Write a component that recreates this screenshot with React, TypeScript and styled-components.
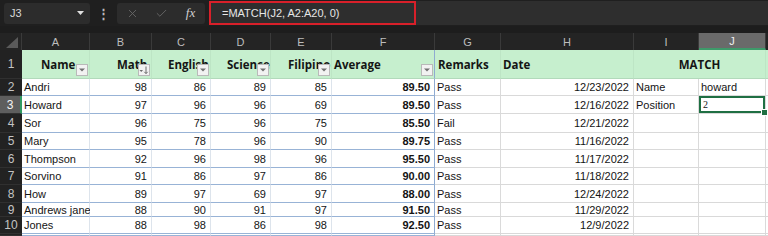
import React from 'react';
import styled, { createGlobalStyle, css } from 'styled-components';
import { X, Check } from 'lucide-react';

const GlobalStyle = createGlobalStyle`
  html, body {
    margin: 0;
    padding: 0;
    background: #ffffff;
  }
  body {
    font-family: "Liberation Sans", Arial, sans-serif;
  }
`;

const WIDTHS = [68, 62, 59, 60, 61, 103, 66, 133, 65, 67];
const LETTERS = ['A', 'B', 'C', 'D', 'E', 'F', 'G', 'H', 'I', 'J'];
const ROW_HEIGHTS = [17, 18, 19, 17, 18, 17, 18, 14, 17];

const rows = [
  ['Andri', 98, 86, 89, 85, '89.50', 'Pass', '12/23/2022', 'Name', 'howard'],
  ['Howard', 97, 96, 96, 69, '89.50', 'Pass', '12/16/2022', 'Position', '2'],
  ['Sor', 96, 75, 96, 75, '85.50', 'Fail', '12/21/2022', '', ''],
  ['Mary', 95, 78, 96, 90, '89.75', 'Pass', '11/16/2022', '', ''],
  ['Thompson', 92, 96, 98, 96, '95.50', 'Pass', '11/17/2022', '', ''],
  ['Sorvino', 91, 86, 97, 86, '90.00', 'Pass', '11/18/2022', '', ''],
  ['How', 89, 97, 69, 97, '88.00', 'Pass', '12/24/2022', '', ''],
  ['Andrews jane', 88, 90, 91, 97, '91.50', 'Pass', '11/29/2022', '', ''],
  ['Jones', 88, 98, 86, 98, '92.50', 'Pass', '12/9/2022', '', ''],
];

const headers = [
  { label: 'Name', indent: 19, sort: false },
  { label: 'Math', indent: 27, sort: true },
  { label: 'English', indent: 16, sort: false },
  { label: 'Science', indent: 16, sort: false },
  { label: 'Filipino', indent: 17, sort: false },
  { label: 'Average', indent: 2, sort: false },
];

const Page = styled.div`
  width: 768px;
  height: 236px;
  overflow: hidden;
  display: flex;
  flex-direction: column;
  background: #1d1d1d;
`;

const FormulaBar = styled.div`
  height: 26px;
  flex-shrink: 0;
  display: flex;
  align-items: center;
  padding-left: 4px;
  background: #1f1f1f;
`;

const NameBox = styled.div`
  width: 86px;
  height: 21px;
  box-sizing: border-box;
  display: flex;
  align-items: center;
  justify-content: space-between;
  padding: 0 6px 0 6px;
  background: #2c2c2c;
  border-radius: 3px;
  color: #dadada;
  font-size: 11px;
`;

const Dots = styled.div`
  width: 27px;
  text-align: center;
  color: #b8b8b8;
  font-size: 13px;
  font-weight: bold;
`;

const FxGroup = styled.div`
  width: 88px;
  height: 21px;
  display: grid;
  grid-template-columns: repeat(3, 29px);
  align-items: center;
  justify-items: center;
  padding-left: 1px;
  box-sizing: border-box;
  background: #2c2c2c;
  border-radius: 3px;
  color: #6a6a6a;
`;

const Fx = styled.span`
  font-family: "Liberation Serif", serif;
  font-style: italic;
  font-size: 13px;
  color: #cfcfcf;
`;

const FormulaArea = styled.div`
  flex: 1;
  height: 24px;
  margin-left: 4px;
  display: flex;
  background: #2e2e2e;
`;

const Highlight = styled.div`
  width: 207px;
  box-sizing: border-box;
  border: 2px solid #d8202a;
  display: flex;
  align-items: center;
  padding-left: 11px;
  color: #e6e6e6;
  font-size: 11px;
`;

const HeaderGap = styled.div`
  height: 7px;
  flex-shrink: 0;
  background: #1d1d1d;
`;

const Sheet = styled.div`
  flex: 1;
  display: grid;
  grid-template-columns: 22px ${WIDTHS.map((w) => `${w}px`).join(' ')} 1fr;
  grid-template-rows: 17px 29px ${ROW_HEIGHTS.map((h) => `${h}px`).join(' ')} 1fr;
  background: #ffffff;
  overflow: hidden;
`;

const Corner = styled.div`
  background: #242424;
  border-right: 1px solid #3a3a3a;
  display: flex;
  align-items: flex-end;
  justify-content: flex-end;
  padding: 0 3px 2px 0;
`;

const ColHead = styled.div<{ $active?: boolean }>`
  background: #242424;
  color: #bdbdbd;
  font-size: 11px;
  display: flex;
  align-items: center;
  justify-content: center;
  border-right: 1px solid #3a3a3a;
  box-sizing: border-box;
  ${(p) =>
    p.$active &&
    css`
      background: #6a6a6a;
      color: #f0f0f0;
      border-bottom: 2px solid #3e9a6a;
    `}
`;

const RowHead = styled.div<{ $active?: boolean }>`
  background: #222222;
  color: #c4c4c4;
  font-size: 12px;
  display: flex;
  align-items: center;
  justify-content: center;
  border-bottom: 1px solid #303030;
  box-sizing: border-box;
  overflow: hidden;
  ${(p) =>
    p.$active &&
    css`
      background: #5e5e5e;
      color: #f4f4f4;
      border-right: 2px solid #2f9a62;
    `}
`;

const TitleCell = styled.div<{ $indent?: number; $edge?: boolean; $center?: boolean }>`
  position: relative;
  overflow: hidden;
  background: #c6efce;
  display: flex;
  align-items: center;
  justify-content: ${(p) => (p.$center ? 'center' : 'flex-start')};
  padding-left: ${(p) => p.$indent ?? 0}px;
  box-sizing: border-box;
  white-space: nowrap;
  font-family: "Open Sans", "Noto Sans", sans-serif;
  font-weight: 700;
  font-size: 11.5px;
  color: #151515;
  border-bottom: 1px solid #b2d9bb;
  border-right: 1px solid ${(p) => (p.$edge ? '#8fabd1' : '#bde5c5')};
`;

const FilterButton = styled.span`
  position: absolute;
  right: 1px;
  bottom: 2px;
  width: 12px;
  height: 12px;
  box-sizing: border-box;
  background: #f2f2f2;
  border: 1px solid #b9b9b9;
  display: flex;
  align-items: center;
  justify-content: center;
`;

const Cell = styled.div<{
  $zone: 'table' | 'plain';
  $align?: 'left' | 'right';
  $bold?: boolean;
  $edge?: boolean;
  $selected?: boolean;
}>`
  position: relative;
  display: flex;
  align-items: center;
  justify-content: ${(p) => (p.$align === 'right' ? 'flex-end' : 'flex-start')};
  padding: ${(p) => (p.$align === 'right' ? '0 4px 0 0' : '0 0 0 2px')};
  box-sizing: border-box;
  white-space: nowrap;
  font-size: 11px;
  font-weight: ${(p) => (p.$bold ? 700 : 400)};
  color: #141414;
  background: #ffffff;
  border-bottom: 1px solid ${(p) => (p.$zone === 'table' ? '#98b3d6' : '#d9d9d9')};
  border-right: 1px solid
    ${(p) => (p.$edge ? '#8fabd1' : p.$zone === 'table' ? '#dde4ec' : '#dadada')};
  ${(p) =>
    p.$selected &&
    css`
      box-shadow: inset 0 0 0 2px #1f6f43;
      &::after {
        content: '';
        position: absolute;
        right: -3px;
        bottom: -3px;
        width: 5px;
        height: 5px;
        background: #1f6f43;
        border: 1px solid #ffffff;
        z-index: 2;
      }
    `}
`;

const TinyValue = styled.span`
  font-family: "Liberation Serif", serif;
  font-size: 10px;
  padding-left: 2px;
`;

const Caret = () => (
  <svg width="7" height="4" viewBox="0 0 7 4">
    <polygon points="0,0 7,0 3.5,4" fill="#e0e0e0" />
  </svg>
);

const FilterIcon = ({ sort }: { sort: boolean }) =>
  sort ? (
    <svg width="10" height="10" viewBox="0 0 10 10">
      <polygon points="0.5,5 4,5 2.25,7" fill="#6a6a6a" />
      <line x1="7" y1="1.5" x2="7" y2="8.5" stroke="#6a6a6a" strokeWidth="1" />
      <polyline points="5.3,6.8 7,8.6 8.7,6.8" fill="none" stroke="#6a6a6a" strokeWidth="1" />
    </svg>
  ) : (
    <svg width="6" height="4" viewBox="0 0 6 4">
      <polygon points="0,0.5 6,0.5 3,3.5" fill="#707070" />
    </svg>
  );

const CornerMark = () => (
  <svg width="12" height="11" viewBox="0 0 12 11">
    <polygon points="12,0 12,11 0,11" fill="#5a5a5a" />
  </svg>
);

function App() {
  return (
    <Page>
      <GlobalStyle />
      <FormulaBar>
        <NameBox>
          <span>J3</span>
          <Caret />
        </NameBox>
        <Dots>⋮</Dots>
        <FxGroup>
          <X size={13} strokeWidth={1.6} />
          <Check size={13} strokeWidth={1.6} />
          <Fx>fx</Fx>
        </FxGroup>
        <FormulaArea>
          <Highlight>=MATCH(J2, A2:A20, 0)</Highlight>
        </FormulaArea>
      </FormulaBar>
      <HeaderGap />
      <Sheet>
        <Corner>
          <CornerMark />
        </Corner>
        {LETTERS.map((l) => (
          <ColHead key={l} $active={l === 'J'}>
            {l}
          </ColHead>
        ))}
        <ColHead />

        <RowHead>1</RowHead>
        {headers.map((h, i) => (
          <TitleCell key={h.label} $indent={h.indent} $edge={i === 5}>
            {h.label}
            <FilterButton>
              <FilterIcon sort={h.sort} />
            </FilterButton>
          </TitleCell>
        ))}
        <TitleCell $indent={3}>Remarks</TitleCell>
        <TitleCell $indent={2}>Date</TitleCell>
        <TitleCell $center style={{ gridColumn: 'span 2' }}>
          MATCH
        </TitleCell>
        <TitleCell />

        {rows.map((r, ri) => (
          <React.Fragment key={ri}>
            <RowHead $active={ri === 1}>{ri + 2}</RowHead>
            {r.map((v, ci) => {
              const inTable = ci < 6;
              const numeric = ci >= 1 && ci <= 5;
              return (
                <Cell
                  key={ci}
                  $zone={inTable ? 'table' : 'plain'}
                  $align={numeric || ci === 7 ? 'right' : 'left'}
                  $bold={ci === 5}
                  $edge={ci === 5}
                  $selected={ri === 1 && ci === 9}
                >
                  {ri === 1 && ci === 9 ? <TinyValue>{v}</TinyValue> : v}
                </Cell>
              );
            })}
            <Cell $zone="plain" />
          </React.Fragment>
        ))}

        <RowHead />
        {LETTERS.map((l, ci) => (
          <Cell key={l} $zone={ci < 6 ? 'table' : 'plain'} $edge={ci === 5} />
        ))}
        <Cell $zone="plain" />
      </Sheet>
    </Page>
  );
}

export default App;
